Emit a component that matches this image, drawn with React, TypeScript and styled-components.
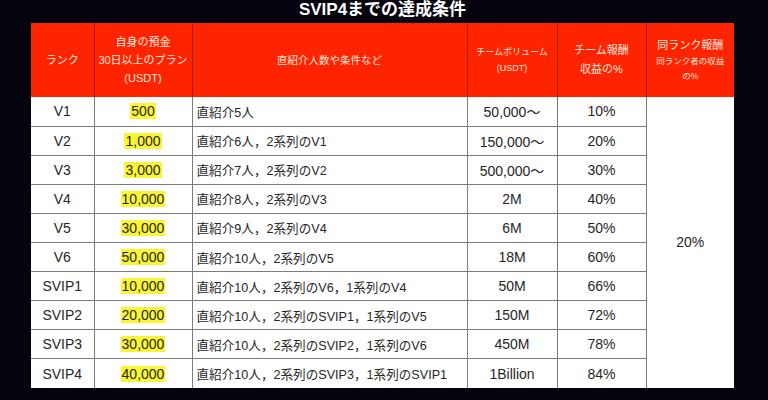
import React from "react";
import styled, { createGlobalStyle } from "styled-components";

const Global = createGlobalStyle`
  html, body { margin: 0; padding: 0; background: #05030e; }
  body { font-family: "Liberation Sans", "Noto Sans CJK JP", sans-serif; }
`;

const Page = styled.div`
  width: 768px;
  height: 400px;
  background: #05030e;
  display: flex;
  flex-direction: column;
  align-items: center;
  padding-right: 3px;
  box-sizing: border-box;
  overflow: hidden;
`;

const Title = styled.h1`
  margin: 0;
  height: 23px;
  line-height: 20px;
  font-size: 17px;
  font-weight: 700;
  color: #ffffff;
  font-family: "Liberation Sans", "Noto Sans CJK JP", sans-serif;
`;

const Table = styled.table`
  width: 703px;
  table-layout: fixed;
  border-collapse: collapse;
  background: #ffffff;
`;

const HeadCell = styled.th<{ $size?: number }>`
  background: #ff2400;
  color: #ffe6df;
  font-weight: 400;
  font-size: ${(p) => p.$size ?? 11}px;
  line-height: 18px;
  height: 74px;
  padding: 0 2px;
  text-align: center;
  vertical-align: middle;
  border-left: 1px solid #a51a08;
  &:first-child { border-left: none; }
`;

const Sub = styled.span<{ $size: number; $lh?: number }>`
  display: block;
  font-size: ${(p) => p.$size}px;
  line-height: ${(p) => p.$lh ?? 16}px;
`;

const Row = styled.tr`
  height: 29.1px;
  & + & td { border-top: 1px solid #7c7c7c; }
`;

const Cell = styled.td<{ $align?: "left" | "center"; $size?: number }>`
  font-size: ${(p) => p.$size ?? 14}px;
  color: #262626;
  text-align: ${(p) => p.$align ?? "center"};
  padding: ${(p) => (p.$align === "left" ? "0 0 0 4px" : "0")};
  border-left: 1px solid #7c7c7c;
  white-space: nowrap;
  vertical-align: middle;
  &:first-child { border-left: none; }
`;

const Merged = styled.td`
  font-size: 14px;
  color: #262626;
  text-align: center;
  vertical-align: middle;
  border-left: 1px solid #7c7c7c;
`;

const Mark = styled.span`
  background: #fbf634;
  padding: 0 1px;
`;

type R = { rank: string; dep: string; cond: string; vol: string; pct: string };

const rows: R[] = [
  { rank: "V1", dep: "500", cond: "直紹介5人", vol: "50,000〜", pct: "10%" },
  { rank: "V2", dep: "1,000", cond: "直紹介6人，2系列のV1", vol: "150,000〜", pct: "20%" },
  { rank: "V3", dep: "3,000", cond: "直紹介7人，2系列のV2", vol: "500,000〜", pct: "30%" },
  { rank: "V4", dep: "10,000", cond: "直紹介8人，2系列のV3", vol: "2M", pct: "40%" },
  { rank: "V5", dep: "30,000", cond: "直紹介9人，2系列のV4", vol: "6M", pct: "50%" },
  { rank: "V6", dep: "50,000", cond: "直紹介10人，2系列のV5", vol: "18M", pct: "60%" },
  { rank: "SVIP1", dep: "10,000", cond: "直紹介10人，2系列のV6，1系列のV4", vol: "50M", pct: "66%" },
  { rank: "SVIP2", dep: "20,000", cond: "直紹介10人，2系列のSVIP1，1系列のV5", vol: "150M", pct: "72%" },
  { rank: "SVIP3", dep: "30,000", cond: "直紹介10人，2系列のSVIP2，1系列のV6", vol: "450M", pct: "78%" },
  { rank: "SVIP4", dep: "40,000", cond: "直紹介10人，2系列のSVIP3，1系列のSVIP1", vol: "1Billion", pct: "84%" },
];

export default function App() {
  return (
    <Page>
      <Global />
      <Title>SVIP4までの達成条件</Title>
      <Table>
        <colgroup>
          <col style={{ width: 63 }} />
          <col style={{ width: 98 }} />
          <col style={{ width: 275 }} />
          <col style={{ width: 90 }} />
          <col style={{ width: 89 }} />
          <col style={{ width: 88 }} />
        </colgroup>
        <thead>
          <tr>
            <HeadCell>ランク</HeadCell>
            <HeadCell>
              自身の預金
              <br />
              30日以上のプラン
              <br />
              (USDT)
            </HeadCell>
            <HeadCell $size={10.5}>直紹介人数や条件など</HeadCell>
            <HeadCell $size={9}>
              <Sub $size={9}>チームボリューム</Sub>
              <Sub $size={9}>(USDT)</Sub>
            </HeadCell>
            <HeadCell>
              <Sub $size={11} $lh={19}>チーム報酬</Sub>
              <Sub $size={11} $lh={19}>収益の%</Sub>
            </HeadCell>
            <HeadCell>
              <Sub $size={11} $lh={17}>同ランク報酬</Sub>
              <Sub $size={8.5} $lh={15}>同ランク者の収益</Sub>
              <Sub $size={8.5} $lh={15}>の%</Sub>
            </HeadCell>
          </tr>
        </thead>
        <tbody>
          {rows.map((r, i) => (
            <Row key={r.rank}>
              <Cell>{r.rank}</Cell>
              <Cell>
                <Mark>{r.dep}</Mark>
              </Cell>
              <Cell $align="left" $size={12.6}>
                {r.cond}
              </Cell>
              <Cell>{r.vol}</Cell>
              <Cell>{r.pct}</Cell>
              {i === 0 && <Merged rowSpan={10}>20%</Merged>}
            </Row>
          ))}
        </tbody>
      </Table>
    </Page>
  );
}
